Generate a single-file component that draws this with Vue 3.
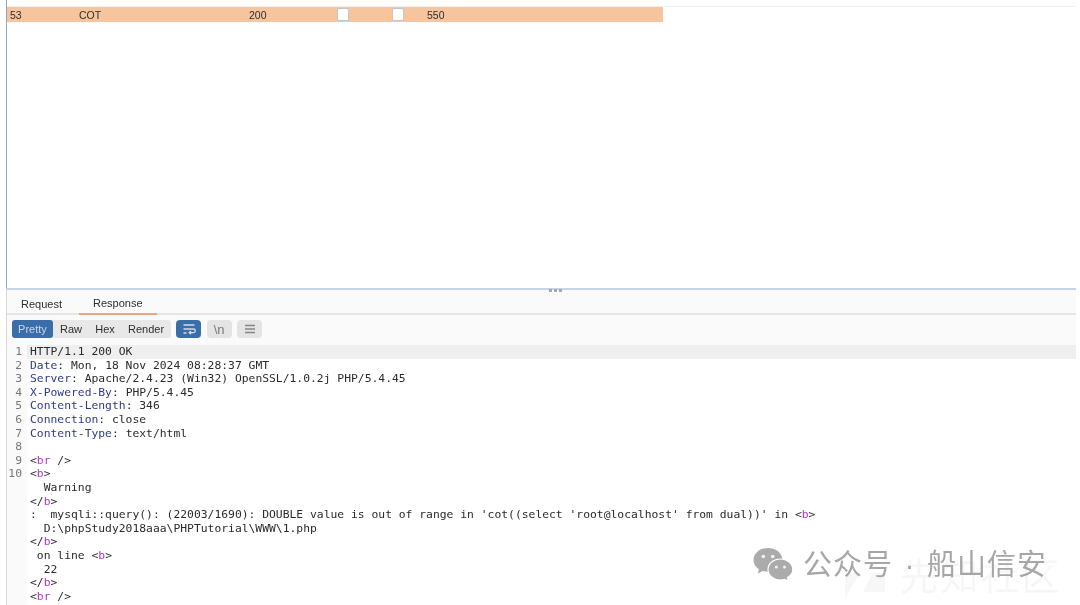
<script setup>
const H = 'k', P = 'p', T = 't';
const lines = [
  { n: 1, active: true, parts: [[P, 'HTTP/1.1 200 OK']] },
  { n: 2, parts: [[H, 'Date'], [P, ': Mon, 18 Nov 2024 08:28:37 GMT']] },
  { n: 3, parts: [[H, 'Server'], [P, ': Apache/2.4.23 (Win32) OpenSSL/1.0.2j PHP/5.4.45']] },
  { n: 4, parts: [[H, 'X-Powered-By'], [P, ': PHP/5.4.45']] },
  { n: 5, parts: [[H, 'Content-Length'], [P, ': 346']] },
  { n: 6, parts: [[H, 'Connection'], [P, ': close']] },
  { n: 7, parts: [[H, 'Content-Type'], [P, ': text/html']] },
  { n: 8, parts: [[P, '']] },
  { n: 9, parts: [[P, '<'], [T, 'br'], [P, ' />']] },
  { n: 10, parts: [[P, '<'], [T, 'b'], [P, '>']] },
  { n: '', parts: [[P, '  Warning']] },
  { n: '', parts: [[P, '</'], [T, 'b'], [P, '>']] },
  { n: '', parts: [[P, ":  mysqli::query(): (22003/1690): DOUBLE value is out of range in 'cot((select 'root@localhost' from dual))' in <"], [T, 'b'], [P, '>']] },
  { n: '', parts: [[P, '  D:\\phpStudy2018aaa\\PHPTutorial\\WWW\\1.php']] },
  { n: '', parts: [[P, '</'], [T, 'b'], [P, '>']] },
  { n: '', parts: [[P, ' on line <'], [T, 'b'], [P, '>']] },
  { n: '', parts: [[P, '  22']] },
  { n: '', parts: [[P, '</'], [T, 'b'], [P, '>']] },
  { n: '', parts: [[P, '<'], [T, 'br'], [P, ' />']] },
];
const modes = ['Pretty', 'Raw', 'Hex', 'Render'];
</script>

<template>
  <div class="page">
    <section class="results">
      <div class="row">
        <span class="c c-id">53</span>
        <span class="c c-name">COT</span>
        <span class="c c-status">200</span>
        <span class="c c-box"><i class="check"></i></span>
        <span class="c c-box2"><i class="check"></i></span>
        <span class="c c-len">550</span>
      </div>
    </section>
    <div class="splitter"><span class="grip"><i></i><i></i><i></i></span></div>
    <section class="panel">
      <nav class="tabs">
        <span class="tab">Request</span>
        <span class="tab on">Response</span>
      </nav>
      <div class="toolbar">
        <div class="modes">
          <span v-for="m in modes" :key="m" class="mode" :class="{ sel: m === 'Pretty' }">{{ m }}</span>
        </div>
        <button class="tool blue">
          <svg width="14" height="12" viewBox="0 0 14 12" fill="none" stroke="#cfdcec" stroke-width="1.3"><path d="M1.500 2h11M1.500 6h10a1.700 1.700 0 0 1 0 3.600H7.500M9 8l-1.800 1.600L9 11.200M1.500 10h3"/></svg>
        </button>
        <button class="tool grey nl">\n</button>
        <button class="tool grey">
          <svg width="12" height="10" viewBox="0 0 12 10" fill="none" stroke="#858585" stroke-width="1.5"><path d="M1 1.500h10M1 5h10M1 8.500h10"/></svg>
        </button>
      </div>
      <div class="code">
        <div v-for="(l, i) in lines" :key="i" class="line" :class="{ active: l.active }">
          <span class="num">{{ l.n }}</span>
          <span class="txt"><span v-for="(p, j) in l.parts" :key="j" :class="p[0]">{{ p[1] }}</span></span>
        </div>
      </div>
    </section>
    <svg class="ghost-logo" width="44" height="30" viewBox="0 0 44 30">
      <path fill="#f7f7f7" d="M2 3h15L2 28zM20 22L30 3h12v19z"/>
    </svg>
    <div class="ghost">先知社区</div>
    <div class="mark">
      <svg width="40" height="34" viewBox="0 0 40 34">
        <path fill="#ababab" d="M15 1C7 1 .5 6.400.5 13c0 3.800 2.100 7.100 5.500 9.300L4.700 26.500l5-2.600c1.700.5 3.400.8 5.300.8C23 24.700 29.500 19.400 29.500 13S23 1 15 1z"/>
        <path fill="#ababab" stroke="#fff" stroke-width="1.200" d="M39.800 22.500c0-5.800-5.600-10.500-12.400-10.500S15 16.700 15 22.500 20.600 33 27.400 33c1.500 0 2.900-.2 4.200-.6l3.800 1.600-1-3.400c3.300-1.900 5.400-4.900 5.400-8.100z"/>
        <circle cx="10.300" cy="9.500" r="1.800" fill="#f3f3f3"/><circle cx="19.700" cy="9.500" r="1.800" fill="#f3f3f3"/>
        <circle cx="23.300" cy="20" r="1.500" fill="#f3f3f3"/><circle cx="31.500" cy="20" r="1.500" fill="#f3f3f3"/>
      </svg>
      <span class="mark-text">公众号<span class="dot">·</span>船山信安</span>
    </div>
  </div>
</template>

<style>
html, body { margin: 0; background: #fff; overflow: hidden; }
</style>

<style scoped>
.page {
  position: relative;
  width: 1080px;
  height: 605px;
  overflow: hidden;
  background: #fff;
  font-family: "Liberation Sans", Arial, sans-serif;
  color: #333;
  filter: blur(0.4px);
}
.results {
  box-sizing: border-box;
  width: 1070px;
  height: 288px;
  padding-top: 7px;
  margin-left: 6px;
  border-left: 1px solid #94a5c2;
  background: linear-gradient(#f1f1f1, #f1f1f1) no-repeat 0 6px / 100% 1px;
}
.row {
  display: flex;
  align-items: center;
  width: 656px;
  height: 15px;
  background: #f6c59e;
  font-size: 10.500px;
  color: #2e2e2e;
}
.c { display: block; flex: none; box-sizing: border-box; }
.c-id { width: 72px; padding-left: 3px; }
.c-name { width: 170px; }
.c-status { width: 88px; }
.c-box { width: 55px; }
.c-box2 { width: 35px; }
.c-len { width: 100px; }
.check {
  display: block;
  width: 12px;
  height: 13px;
  box-sizing: border-box;
  background: #fff;
  border: 1px solid #c4c4c4;
  border-radius: 2px;
}
.splitter {
  position: relative;
  width: 1070px;
  height: 2px;
  margin-left: 6px;
  background: #c6d4ea;
}
.grip {
  position: absolute;
  left: 543px;
  top: 1px;
  display: flex;
  gap: 2px;
}
.grip i { display: block; width: 3px; height: 3px; background: #a8a8a8; }
.panel {
  width: 1070px;
  margin-left: 6px;
  border-left: 1px solid #d6d6d6;
  box-sizing: border-box;
  background: #fafafa;
  height: 315px;
}
.tabs {
  box-sizing: border-box;
  display: flex;
  height: 25px;
  border-bottom: 2px solid #e6e6e6;
  font-size: 11px;
  color: #2e2e2e;
}
.tab { display: flex; align-items: center; box-sizing: border-box; height: 25px; padding-top: 2px; }
.tabs .tab:first-child { width: 72px; padding-left: 14px; }
.tab.on { padding: 2px 14px 0; border-bottom: 2px solid #f4a27c; }
.toolbar {
  display: flex;
  align-items: center;
  box-sizing: border-box;
  height: 30px;
  padding: 0 0 2px 4.500px;
  gap: 5.500px;
}
.modes {
  display: flex;
  height: 18px;
  border-radius: 3px;
  background: #e8e8e8;
  font-size: 11px;
}
.mode { display: flex; align-items: center; padding: 0 6.600px; color: #2e2e2e; }
.mode.sel { background: #3a6ea8; color: #c5d6ea; border-radius: 3px; }
.tool {
  display: flex;
  align-items: center;
  justify-content: center;
  box-sizing: border-box;
  width: 25px;
  height: 18px;
  padding: 0;
  border: 0;
  border-radius: 4px;
}
.tool.blue { background: #3a6ea8; }
.tool.grey { background: #e4e4e4; color: #7a7a7a; }
.nl { font: 13px "Liberation Sans", sans-serif; }
.code {
  font-family: "DejaVu Sans Mono", monospace;
  font-size: 11.350px;
  line-height: 13.600px;
  color: #2a2a2a;
  height: 260px;
  overflow: hidden;
  background: linear-gradient(90deg, #fafafa 20px, #fff 20px);
}
.line { display: flex; height: 13.600px; white-space: pre; }
.line.active { background: #efefef; }
.num {
  flex: none;
  box-sizing: border-box;
  width: 20px;
  padding-right: 5px;
  text-align: right;
  color: #777;
  background: #fafafa;
}
.txt { padding-left: 3px; }
.k { color: #2e3a8c; }
.t { color: #b635c9; }
.ghost-logo {
  position: absolute;
  left: 843px;
  top: 570px;
}
.ghost {
  position: absolute;
  left: 900px;
  top: 551px;
  font-family: "Noto Sans CJK SC", sans-serif;
  font-size: 38px;
  line-height: 46px;
  letter-spacing: 2.500px;
  color: rgba(0, 0, 0, 0.035);
  white-space: nowrap;
}
.mark {
  position: absolute;
  left: 753px;
  top: 545px;
  display: flex;
  align-items: center;
  gap: 10px;
}
.mark-text {
  font-family: "Noto Sans CJK SC", sans-serif;
  font-size: 29px;
  line-height: 34px;
  color: #a6a6a6;
  letter-spacing: 1px;
  white-space: nowrap;
}
.dot {
  display: inline-block;
  width: 34px;
  text-align: center;
  font-family: "Liberation Sans", sans-serif;
}
</style>
